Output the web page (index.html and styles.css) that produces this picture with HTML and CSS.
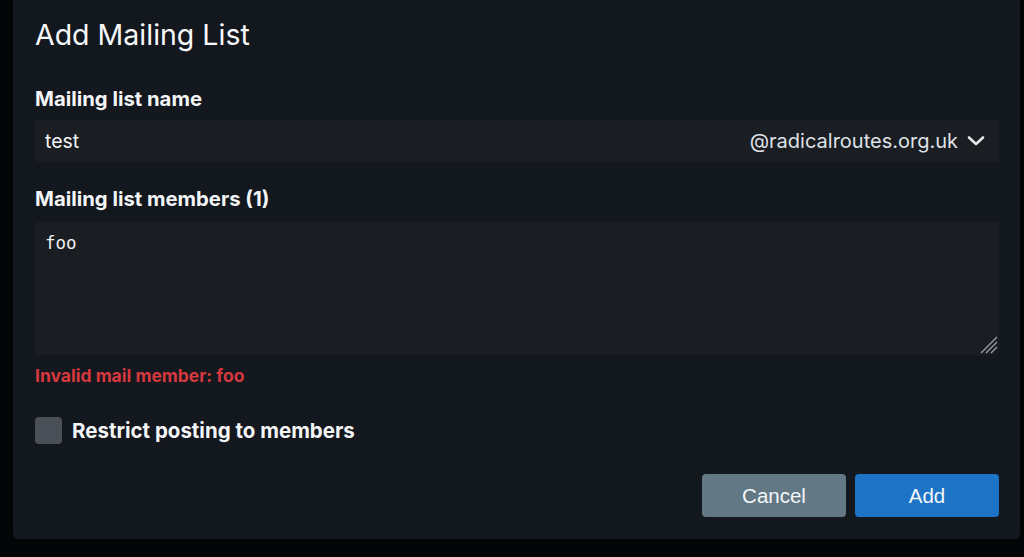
FILE: index.html
```html
<!DOCTYPE html>
<html>
<head>
<meta charset="utf-8">
<link rel="stylesheet" href="styles.css">
</head>
<body>
<div class="page">
  <div class="modal">
    <h1 class="title">Add Mailing List</h1>
    <div class="field">
      <label class="label">Mailing list name</label>
      <div class="input">
        <span class="value">test</span>
        <span class="domain">@radicalroutes.org.uk
          <svg class="chev" width="18" height="12" viewBox="0 0 18 12"><path d="M2 2.5 L9 9 L16 2.5" fill="none" stroke="#e6e8ec" stroke-width="2.6" stroke-linecap="round" stroke-linejoin="round"/></svg>
        </span>
      </div>
    </div>
    <div class="field">
      <label class="label">Mailing list members (1)</label>
      <div class="textarea">
        <span class="mono">foo</span>
        <svg class="grip" width="20" height="20" viewBox="0 0 20 20"><path d="M19 3 L3 19 M19 8 L8 19 M19 13 L13 19" stroke="#9aa0a8" stroke-width="1.3"/></svg>
      </div>
      <div class="error">Invalid mail member: foo</div>
    </div>
    <div class="check">
      <span class="box"></span>
      <span class="check-label">Restrict posting to members</span>
    </div>
    <div class="actions">
      <button class="btn cancel">Cancel</button>
      <button class="btn add">Add</button>
    </div>
  </div>
</div>
</body>
</html>
```
FILE: styles.css
```css
html, body {
  margin: 0;
  padding: 0;
  background: #040506;
  height: 100%;
  overflow: hidden;
}
.page {
  padding-left: 13px;
  width: 1007px;
}
.modal {
  background: #13171e;
  border-radius: 0 0 5px 5px;
  padding: 17px 21px 22px 22px;
  height: 539px;
  box-sizing: border-box;
  font-family: Inter, "Noto Sans", sans-serif;
  color: #f4f5f7;
  display: flex;
  flex-direction: column;
}
.title {
  margin: 0 0 33px 0;
  font-size: 28.5px;
  line-height: 36px;
  font-weight: 400;
  color: #f7f8fa;
}
.field {
  display: flex;
  flex-direction: column;
}
.label {
  font-size: 20.3px;
  font-weight: 700;
  line-height: 26px;
  margin-bottom: 8px;
}
.input {
  height: 42px;
  background: #1a1d22;
  border-radius: 4px;
  display: flex;
  align-items: center;
  justify-content: space-between;
  padding: 0 14px 0 10px;
  font-size: 19.5px;
  margin-bottom: 24px;
}
.value { color: #f4f5f7; }
.domain {
  color: #dfe2e7;
  font-size: 20px;
  display: flex;
  align-items: center;
  gap: 9px;
}
.chev { display: block; }
.textarea {
  position: relative;
  height: 133px;
  margin-top: 2px;
  background: #1a1d22;
  border-radius: 4px;
  padding: 11px 10px;
  box-sizing: border-box;
}
.mono {
  font-family: "DejaVu Sans Mono", monospace;
  font-size: 17.5px;
  color: #eef0f3;
}
.grip {
  position: absolute;
  right: 1px;
  bottom: 1px;
}
.error {
  color: #d6383e;
  font-size: 17.5px;
  font-weight: 700;
  margin-top: 11px;
  line-height: 20px;
}
.check {
  display: flex;
  align-items: center;
  gap: 10px;
  margin-top: 31px;
}
.box {
  width: 27px;
  height: 27px;
  border-radius: 4px;
  background: #4a4f58;
}
.check-label {
  font-size: 20.5px;
  font-weight: 700;
}
.actions {
  margin-top: auto;
  display: flex;
  justify-content: flex-end;
  gap: 9px;
}
.btn {
  width: 144px;
  height: 43px;
  border: none;
  border-radius: 4px;
  font-family: "Liberation Sans", Arial, sans-serif;
  font-size: 20.5px;
  color: #f4f6f8;
}
.cancel { background: #627985; }
.add { background: #1d73c5; }
```
